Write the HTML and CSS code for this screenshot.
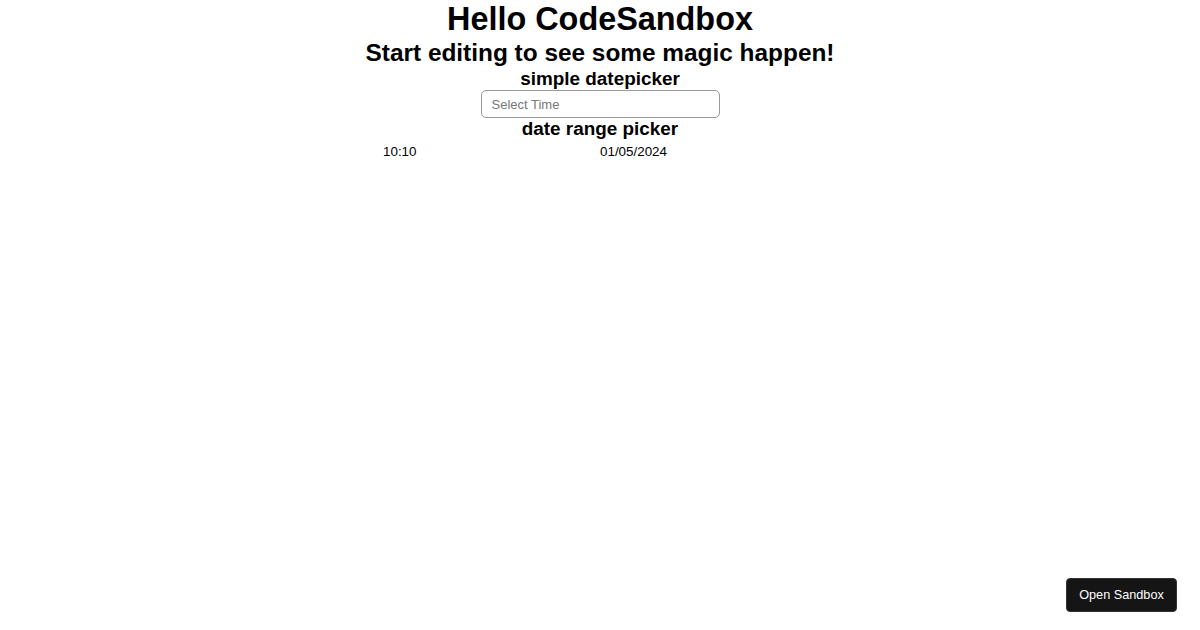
FILE: index.html
```html
<!DOCTYPE html>
<html>
<head>
<meta charset="utf-8">
<link rel="stylesheet" href="styles.css">
</head>
<body>
<div class="app">
  <h1>Hello CodeSandbox</h1>
  <h2>Start editing to see some magic happen!</h2>
  <h3>simple datepicker</h3>
  <input class="time-input" type="text" placeholder="Select Time">
  <h3>date range picker</h3>
  <div class="range">
    <span>10:10</span>
    <span>01/05/2024</span>
  </div>
</div>
<a class="open-sandbox" href="#">Open Sandbox</a>
</body>
</html>
```
FILE: styles.css
```css
html, body {
  margin: 0;
  padding: 0;
  background: #fff;
}
body {
  font-family: "Liberation Sans", Arial, sans-serif;
  color: #000;
}
.app {
  text-align: center;
  display: flex;
  flex-direction: column;
  align-items: center;
}
h1, h2, h3 {
  margin: 0;
  font-weight: bold;
}
h1 { font-size: 32.4px; line-height: 39px; }
h2 { font-size: 24.4px; line-height: 28.5px; }
h3 { font-size: 18.9px; line-height: 21.5px; }
.time-input {
  box-sizing: border-box;
  width: 239px;
  height: 28px;
  margin: 1px 0 0;
  padding: 0 10px;
  border: 1px solid #999;
  border-radius: 5px;
  font-family: "Liberation Sans", Arial, sans-serif;
  font-size: 13px;
  color: #000;
  outline: none;
}
.time-input::placeholder { color: #777; }
.range {
  width: 434px;
  display: grid;
  grid-template-columns: 1fr 1fr;
  text-align: left;
  font-size: 13.4px;
  margin-top: 4px;
}
.open-sandbox {
  position: fixed;
  right: 23px;
  bottom: 18px;
  width: 111px;
  height: 34px;
  box-sizing: border-box;
  display: flex;
  align-items: center;
  justify-content: center;
  background: #151515;
  color: #fff;
  border-radius: 4px;
  font-size: 12.7px;
  text-decoration: none;
  border: 1px solid #333;
}
```
